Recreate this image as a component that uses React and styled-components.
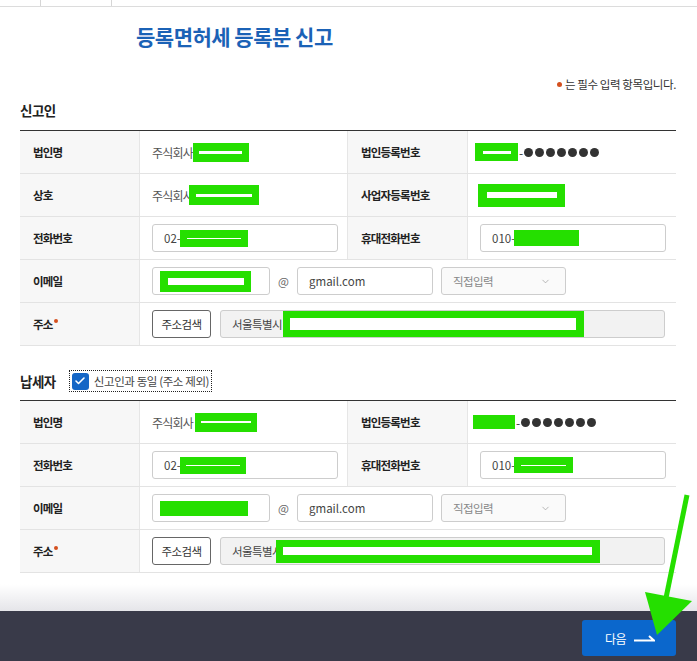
import React from 'react';
import styled, { createGlobalStyle } from 'styled-components';
import { ChevronDown, Check } from 'lucide-react';

const Global = createGlobalStyle`
  html, body { margin: 0; padding: 0; background: #fff; }
  body { font-family: "Noto Sans CJK KR", "Noto Sans", sans-serif; color: #222; }
  * { box-sizing: border-box; }
`;

const Page = styled.div`
  position: relative;
  width: 697px;
  height: 661px;
  overflow: hidden;
  display: flex;
  flex-direction: column;
`;

const TabStrip = styled.div`
  height: 7px;
  flex: none;
  border-bottom: 1px solid #dcdcdc;
  display: flex;
  padding-left: 40px;
`;

const TabEdge = styled.div`
  width: 72px;
  border-left: 1px solid #d6d6d6;
  border-right: 1px solid #d6d6d6;
`;

const Title = styled.h1`
  margin: 14px 0 0;
  padding-left: 136px;
  height: 30px;
  line-height: 30px;
  font-size: 21px;
  font-weight: 700;
  letter-spacing: -0.5px;
  color: #1b62b6;
`;

const Content = styled.div`
  padding: 0 21px 0 20px;
  flex: none;
`;

const Note = styled.div`
  margin-top: 25px;
  height: 16px;
  display: flex;
  justify-content: flex-end;
  align-items: center;
  gap: 3px;
  font-size: 11.5px;
  letter-spacing: -0.4px;
  color: #333;
`;

const Dot = styled.span`
  width: 5px;
  height: 5px;
  border-radius: 50%;
  background: #d4501f;
  display: inline-block;
  flex: none;
`;

const SectionHead = styled.div`
  margin-top: ${p => p.$mt}px;
  margin-bottom: ${p => p.$mb}px;
  height: 20px;
  display: flex;
  align-items: center;
`;

const SectionTitle = styled.h2`
  margin: 0;
  font-size: 13.5px;
  font-weight: 700;
  letter-spacing: -0.5px;
  color: #222;
`;

const SameBox = styled.label`
  margin-left: 14px;
  height: 20px;
  padding: 0 2px;
  outline: 1px dotted #222;
  display: flex;
  align-items: center;
  gap: 5px;
  font-size: 11.5px;
  letter-spacing: -0.4px;
  color: #444;
`;

const CheckMark = styled.span`
  width: 17px;
  height: 17px;
  border-radius: 3px;
  background: #1466c6;
  display: inline-flex;
  align-items: center;
  justify-content: center;
  color: #fff;
`;

const Table = styled.div`
  border-top: 1px solid #333;
`;

const Row = styled.div`
  display: grid;
  grid-template-columns: ${p => (p.$wide ? '120px 1fr' : '120px 208px 120px 208px')};
  height: 43px;
  border-bottom: 1px solid #e3e3e3;
`;

const Label = styled.div`
  background: #f7f7f7;
  border-right: 1px solid #e6e6e6;
  display: flex;
  align-items: center;
  gap: 1px;
  padding-left: 13px;
  font-size: 11.5px;
  font-weight: 700;
  letter-spacing: -0.8px;
  color: #222;
`;

const Req = styled.span`
  width: 4px;
  height: 4px;
  border-radius: 50%;
  background: #d4501f;
  align-self: flex-start;
  margin-top: 16px;
`;

const Value = styled.div`
  display: flex;
  align-items: center;
  padding-left: 12px;
  border-right: ${p => (p.$divider ? '1px solid #e6e6e6' : 'none')};
  font-size: 12px;
  letter-spacing: -0.8px;
  color: #555;
  white-space: nowrap;
`;

const Field = styled.div`
  width: ${p => p.$w}px;
  height: 28px;
  flex: none;
  border: 1px solid #cdcdcd;
  border-radius: 3px;
  background: ${p => p.$bg || '#fff'};
  display: flex;
  align-items: center;
  padding: 0 11px;
  font-size: 11.5px;
  letter-spacing: ${p => (p.$latin ? '0' : '-0.6px')};
  color: #444;
  white-space: nowrap;
`;

const SelectBox = styled(Field)`
  justify-content: space-between;
  padding: 0 14px 0 11px;
  color: #888;
  background: #fafafa;
`;

const At = styled.span`
  width: 27px;
  text-align: center;
  font-size: 11.5px;
  color: #666;
  letter-spacing: 0;
`;

const Gap = styled.span`
  width: ${p => p.$w}px;
  flex: none;
`;

const SearchBtn = styled.button`
  width: 59px;
  height: 28px;
  flex: none;
  border: 1px solid #666;
  border-radius: 3px;
  background: #fff;
  font-family: inherit;
  font-size: 11.5px;
  letter-spacing: -0.6px;
  color: #333;
  padding: 0;
  margin-right: 9px;
`;

const Masked = styled.span`
  display: inline-flex;
  align-items: center;
  gap: 2px;
  margin-left: 1px;
  color: #333;
`;

const MaskDot = styled.span`
  width: 9px;
  height: 9px;
  border-radius: 50%;
  background: #333;
  display: inline-block;
`;

const Redact = styled.span`
  display: inline-flex;
  align-items: center;
  justify-content: center;
  flex: none;
  width: ${p => p.$w}px;
  height: ${p => p.$h}px;
  margin-left: ${p => p.$ml || 0}px;
  background: #25df00;
  position: relative;
  z-index: 1;
`;

const RedactLine = styled.span`
  display: block;
  width: ${p => p.$w}px;
  height: ${p => p.$h}px;
  background: #fff;
`;

const Fade = styled.div`
  flex: 1;
  background: linear-gradient(to bottom, #fff 0%, #fff 30%, #e5e5e9 100%);
`;

const Footer = styled.footer`
  height: 50px;
  flex: none;
  background: #393a49;
  display: flex;
  justify-content: flex-end;
  align-items: flex-start;
  padding: 9px 21px 0 0;
`;

const NextBtn = styled.button`
  width: 94px;
  height: 36px;
  border: none;
  border-radius: 3px;
  background: #0b67cc;
  color: #fff;
  font-family: inherit;
  font-size: 12px;
  letter-spacing: -0.5px;
  display: flex;
  align-items: center;
  justify-content: center;
  gap: 7px;
  padding: 0 0 0 2px;
`;

const Annotation = styled.svg`
  position: absolute;
  left: 0;
  top: 0;
  pointer-events: none;
  z-index: 5;
`;

const R = ({ w, h, lw, lh, ml }) => (
  <Redact $w={w} $h={h} $ml={ml}>
    {lw ? <RedactLine $w={lw} $h={lh} /> : null}
  </Redact>
);

const Dots = () => (
  <Masked>
    -
    {Array.from({ length: 7 }).map((_, i) => (
      <MaskDot key={i} />
    ))}
  </Masked>
);

const Email = ({ r }) => (
  <Row $wide>
    <Label>이메일</Label>
    <Value>
      <Field $w={118}>{r}</Field>
      <At>@</At>
      <Field $w={136} $latin>gmail.com</Field>
      <Gap $w={8} />
      <SelectBox $w={125}>
        직접입력
        <ChevronDown size={11} strokeWidth={1.5} color="#999" />
      </SelectBox>
    </Value>
  </Row>
);

const Address = ({ r }) => (
  <Row $wide>
    <Label>
      주소<Req />
    </Label>
    <Value>
      <SearchBtn>주소검색</SearchBtn>
      <Field $w={445} $bg="#f2f2f2">
        서울특별시{r}
      </Field>
    </Value>
  </Row>
);

export default function App() {
  return (
    <>
      <Global />
      <Page>
        <TabStrip>
          <TabEdge />
        </TabStrip>
        <Title>등록면허세 등록분 신고</Title>
        <Content>
          <Note>
            <Dot />는 필수 입력 항목입니다.
          </Note>

          <SectionHead $mt={8} $mb={10}>
            <SectionTitle>신고인</SectionTitle>
          </SectionHead>
          <Table>
            <Row>
              <Label>법인명</Label>
              <Value $divider>
                주식회사
                <R w={56} h={19} lw={43} lh={3} ml={0} />
              </Value>
              <Label>법인등록번호</Label>
              <Value>
                <R w={43} h={18} lw={28} lh={3} ml={-5} />
                <Dots />
              </Value>
            </Row>
            <Row>
              <Label>상호</Label>
              <Value $divider>
                주식회사
                <R w={70} h={20} lw={56} lh={3} ml={-4} />
              </Value>
              <Label>사업자등록번호</Label>
              <Value>
                <R w={87} h={23} lw={70} lh={6} ml={-2} />
              </Value>
            </Row>
            <Row>
              <Label>전화번호</Label>
              <Value $divider>
                <Field $w={186} $latin>
                  02-
                  <R w={68} h={17} lw={54} lh={1} ml={-1} />
                </Field>
              </Value>
              <Label>휴대전화번호</Label>
              <Value>
                <Field $w={186} $latin>
                  010-
                  <R w={65} h={16} ml={-1} />
                </Field>
              </Value>
            </Row>
            <Email r={<R w={91} h={21} lw={76} lh={7} ml={-4} />} />
            <Address r={<R w={301} h={26} lw={286} lh={12} ml={1} />} />
          </Table>

          <SectionHead $mt={25} $mb={9}>
            <SectionTitle>납세자</SectionTitle>
            <SameBox>
              <CheckMark>
                <Check size={12} strokeWidth={3.2} />
              </CheckMark>
              신고인과 동일 (주소 제외)
            </SameBox>
          </SectionHead>
          <Table>
            <Row>
              <Label>법인명</Label>
              <Value $divider>
                주식회사
                <R w={62} h={19} lw={50} lh={2} ml={2} />
              </Value>
              <Label>법인등록번호</Label>
              <Value>
                <R w={42} h={14} ml={-7} />
                <Dots />
              </Value>
            </Row>
            <Row>
              <Label>전화번호</Label>
              <Value $divider>
                <Field $w={186} $latin>
                  02-
                  <R w={66} h={17} lw={54} lh={1} ml={-1} />
                </Field>
              </Value>
              <Label>휴대전화번호</Label>
              <Value>
                <Field $w={186} $latin>
                  010-
                  <R w={59} h={16} lw={45} lh={1} ml={-1} />
                </Field>
              </Value>
            </Row>
            <Email r={<R w={88} h={15} ml={-4} />} />
            <Address r={<R w={324} h={23} lw={309} lh={8} ml={-6} />} />
          </Table>
        </Content>
        <Fade />
        <Footer>
          <NextBtn>
            다음
            <svg width="22" height="10" viewBox="0 0 22 10" fill="none">
              <path d="M1 7.5H21L16 3" stroke="#fff" strokeWidth="2" strokeLinejoin="miter" />
            </svg>
          </NextBtn>
        </Footer>
        <Annotation width="697" height="661" viewBox="0 0 697 661">
          <line x1="687" y1="495" x2="666" y2="598" stroke="#25df00" strokeWidth="5" />
          <polygon points="645,592 692,601 657,635" fill="#25df00" />
        </Annotation>
      </Page>
    </>
  );
}
